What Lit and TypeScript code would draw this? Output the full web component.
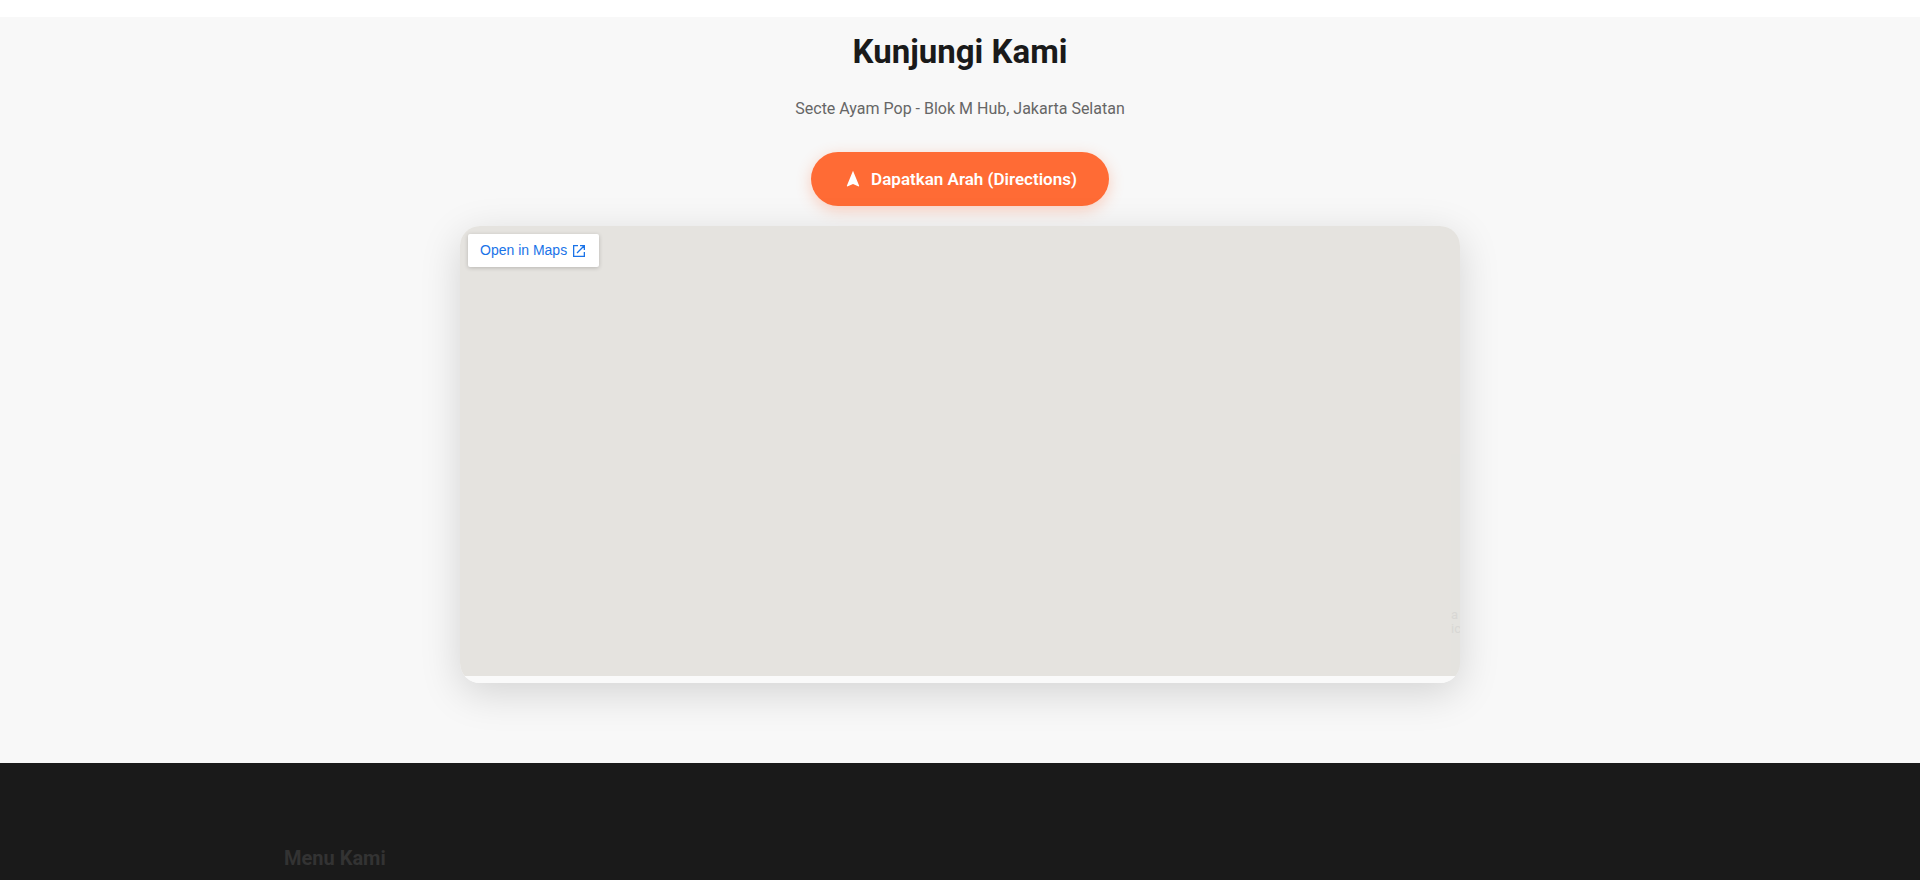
import { LitElement, html, css } from "lit";
import { customElement } from "lit/decorators.js";

@customElement("app-root")
export class AppRoot extends LitElement {
  static styles = css`
    :host {
      display: block;
      min-height: 100vh;
      background: #1a1a1a;
      color: #1a1a1a;
      font-family: Roboto, sans-serif;
      font-size: 16px;
      line-height: 26px;
    }
    .spacer {
      height: 17px;
      background: #fff;
    }
    .visit {
      background: #f8f8f8;
      padding: 8px 24px 80px;
      text-align: center;
    }
    h2 {
      margin: 0 0 18px;
      font-size: 33px;
      line-height: 53px;
      font-weight: 700;
    }
    .address {
      margin: 0 0 30px;
      color: #666;
    }
    .directions {
      display: inline-flex;
      align-items: center;
      gap: 8px;
      padding: 14px 32px;
      border-radius: 50px;
      background: #ff6b35;
      color: #fff;
      font-size: 17px;
      font-weight: 600;
      text-decoration: none;
      box-shadow: 0 4px 15px rgba(255, 107, 53, 0.3);
    }
    .map {
      position: relative;
      max-width: 1000px;
      margin: 20px auto 0;
      border-radius: 20px;
      overflow: hidden;
      text-align: left;
      box-shadow: 0 10px 40px rgba(0, 0, 0, 0.15);
    }
    .canvas {
      height: 450px;
      padding: 8px;
      box-sizing: border-box;
      background: #e5e3df;
    }
    .open {
      display: inline-flex;
      align-items: center;
      gap: 6px;
      padding: 0 14px 0 12px;
      height: 33px;
      border-radius: 2px;
      background: #fff;
      color: #1a73e8;
      font: 14px/33px "Liberation Sans", sans-serif;
      text-decoration: none;
      box-shadow: 0 1px 4px rgba(0, 0, 0, 0.2);
    }
    .panel {
      position: absolute;
      right: 0;
      bottom: 7px;
      width: 9px;
      height: 222px;
      padding-top: 154px;
      box-sizing: border-box;
      background: #e4e3df;
      color: #d8d7d4;
      font-size: 13px;
      line-height: 14px;
    }
    .edge {
      height: 7px;
      background: #fafafa;
    }
    footer {
      max-width: 1352px;
      margin: 0 auto;
      padding: 80px 0 0;
    }
    h3 {
      margin: 0;
      font-size: 20px;
      line-height: 30px;
      font-weight: 700;
      color: #333;
    }
  `;

  render() {
    return html`
      <div class="spacer"></div>
      <section class="visit">
        <h2>Kunjungi Kami</h2>
        <p class="address">Secte Ayam Pop - Blok M Hub, Jakarta Selatan</p>
        <a class="directions" href="#directions">
          <svg width="20" height="20" viewBox="0 0 24 24" fill="#fff" aria-hidden="true">
            <path d="M12 2 4.5 20.3l.7.7L12 18l6.8 3 .7-.7z" />
          </svg>
          Dapatkan Arah (Directions)
        </a>
        <div class="map">
          <div class="canvas">
            <a class="open" href="#maps">
              Open in Maps
              <svg width="12" height="12" viewBox="0 0 12 12" fill="none" stroke="#1a73e8" stroke-width="1.3" aria-hidden="true">
                <path d="M5 .65H.65v10.7h10.7V7M7 .65h4.35V5M11.2.8 4 8" />
              </svg>
            </a>
          </div>
          <div class="panel">a<br />ic</div>
          <div class="edge"></div>
        </div>
      </section>
      <footer><h3>Menu Kami</h3></footer>
    `;
  }
}
